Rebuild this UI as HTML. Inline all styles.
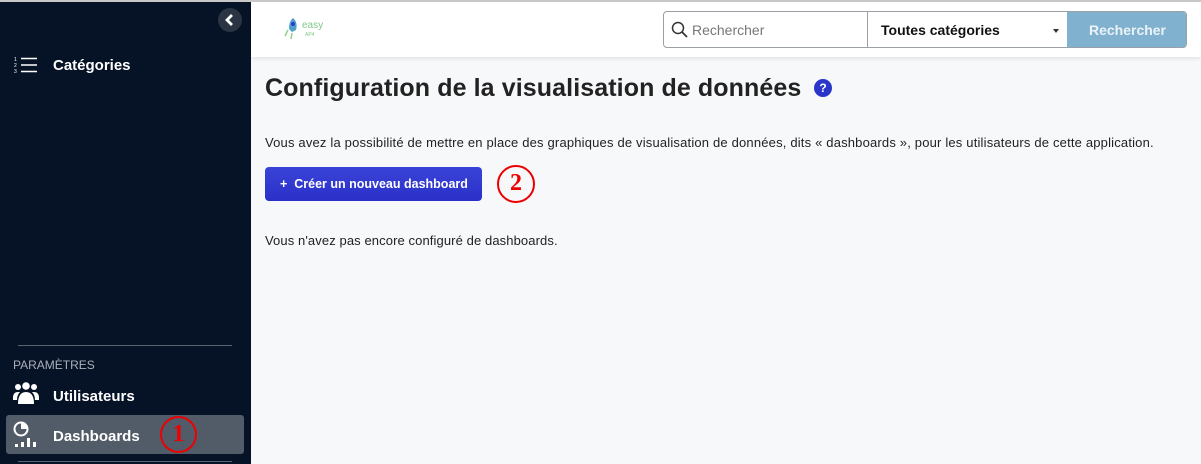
<!DOCTYPE html>
<html><head><meta charset="utf-8"><style>
*{box-sizing:border-box;margin:0;padding:0}
body{width:1201px;height:464px;overflow:hidden;font-family:"Liberation Sans",sans-serif;background:#f7f8fa;position:relative}
.top{position:absolute;left:0;top:0;width:1201px;height:2px;background:#c8c8c8;z-index:5}
.side{position:absolute;left:0;top:0;width:251px;height:464px;background:#061226;color:#fff}
.hdr{position:absolute;left:251px;top:0;width:950px;height:57px;background:#fff;box-shadow:0 2px 4px rgba(0,0,0,.08)}
.abs{position:absolute}
</style></head><body>
<div class="top"></div>
<div class="side">
  <div class="abs" style="left:218px;top:8px;width:24px;height:24px;border-radius:50%;background:#2b3442"></div>
  <svg class="abs" style="left:224px;top:13px" width="12" height="14" viewBox="0 0 12 14"><path d="M8 2 L3 7 L8 12" stroke="#fff" stroke-width="2.8" fill="none"/></svg>
  <svg class="abs" style="left:14px;top:56px" width="24" height="18" viewBox="0 0 24 18"><g fill="#fff" font-size="5" font-family="Liberation Sans"><text x="0" y="5">1</text><text x="0" y="11">2</text><text x="0" y="17">3</text></g><path d="M7 2.5H23M7 9H23M7 15.5H23" stroke="#fff" stroke-width="1.6"/></svg>
  <div class="abs" style="left:53px;top:57px;font-size:15px;font-weight:bold">Catégories</div>
  <div class="abs" style="left:18px;top:345px;width:214px;height:1px;background:#5a6270"></div>
  <div class="abs" style="left:13px;top:358px;font-size:12px;color:#aab0ba">PARAMÈTRES</div>
  <svg class="abs" style="left:13px;top:382px" width="26" height="24" viewBox="0 0 26 24"><g fill="#fff"><circle cx="5" cy="5" r="3"/><circle cx="13" cy="4" r="3.8"/><circle cx="21" cy="5" r="3"/><path d="M0 16q0-6 5-6h2q-3 3-3 8H0z"/><path d="M26 16q0-6-5-6h-2q3 3 3 8h4z"/><path d="M5 22q0-12 8-12t8 12z"/></g></svg>
  <div class="abs" style="left:53px;top:388px;font-size:15px;font-weight:bold">Utilisateurs</div>
  <div class="abs" style="left:6px;top:415px;width:238px;height:39px;background:#525b68;border-radius:3px"></div>
  <svg class="abs" style="left:13px;top:420px" width="26" height="28" viewBox="0 0 26 28"><circle cx="8" cy="9" r="6.5" stroke="#fff" stroke-width="2" fill="none"/><path d="M8 9V3A6 6 0 0 1 14 9z" fill="#fff"/><g fill="#fff"><rect x="2" y="24" width="3" height="3"/><rect x="8" y="22" width="3" height="5"/><rect x="14" y="18" width="3" height="9"/><rect x="20" y="22" width="3" height="5"/></g></svg>
  <div class="abs" style="left:53px;top:428px;font-size:15px;font-weight:bold">Dashboards</div>
  <div class="abs" style="left:160px;top:416px;width:37px;height:37px;border:2px solid #e00;border-radius:50%;color:#e00;font-family:'Liberation Serif',serif;font-weight:bold;font-size:24px;text-align:center;line-height:32px">1</div>
  <div class="abs" style="left:18px;top:461px;width:214px;height:1px;background:#5a6270"></div>
</div>
<div class="hdr">
  <svg class="abs" style="left:32px;top:14px" width="48" height="28" viewBox="0 0 48 28"><path d="M10 4q5 4 3 12l-4 2-3-3q0-8 4-11z" fill="#4fa0c8"/><circle cx="10" cy="10" r="2" fill="#2a3bd6"/><path d="M5 16l-3 6M9 19l-1 6" stroke="#8fd08f" stroke-width="1.5"/><text x="19" y="14" font-size="10" fill="#7dc88a" font-family="Liberation Sans">easy</text><text x="22" y="22" font-size="5" fill="#7dc88a" font-family="Liberation Sans">AP4</text></svg>
  <div class="abs" style="left:412px;top:11px;width:524px;height:37px;border:1px solid #9aa0a6;border-radius:4px;background:#fff;overflow:hidden">
    <svg class="abs" style="left:7px;top:9px" width="18" height="18" viewBox="0 0 18 18"><circle cx="7" cy="7" r="5.5" stroke="#333" stroke-width="1.5" fill="none"/><path d="M11 11l5 5" stroke="#333" stroke-width="1.8"/></svg>
    <div class="abs" style="left:28px;top:10px;font-size:14px;color:#777">Rechercher</div>
    <div class="abs" style="left:203px;top:0;width:1px;height:37px;background:#9aa0a6"></div>
    <div class="abs" style="left:217px;top:10px;font-size:14px;font-weight:bold;color:#111">Toutes catégories</div>
    <div class="abs" style="left:389px;top:17px;border:3px solid transparent;border-top:4px solid #333"></div>
    <div class="abs" style="left:403px;top:0;width:121px;height:37px;background:#80b1cf;color:#eaf3f8;font-weight:bold;font-size:14px;text-align:center;line-height:36px">Rechercher</div>
  </div>
</div>
<div class="abs" style="left:265px;top:74px;font-size:25px;font-weight:bold;color:#222;letter-spacing:0.1px">Configuration de la visualisation de données</div>
<div class="abs" style="left:814px;top:79px;width:18px;height:18px;border-radius:50%;background:#2a36c9;color:#fff;font-size:12px;font-weight:bold;text-align:center;line-height:18px">?</div>
<div class="abs" style="left:265px;top:135px;font-size:13px;color:#222;letter-spacing:0.18px">Vous avez la possibilité de mettre en place des graphiques de visualisation de données, dits « dashboards », pour les utilisateurs de cette application.</div>
<div class="abs" style="left:265px;top:167px;width:217px;height:34px;border-radius:4px;background:linear-gradient(#3a43d8,#2a30c8);color:#fff;font-size:12.5px;font-weight:bold;line-height:34px;padding-left:15px">+&nbsp; Créer un nouveau dashboard</div>
<div class="abs" style="left:497px;top:165px;width:38px;height:38px;border:2px solid #e00;border-radius:50%;color:#e00;font-family:'Liberation Serif',serif;font-weight:bold;font-size:24px;text-align:center;line-height:33px">2</div>
<div class="abs" style="left:265px;top:233px;font-size:13px;color:#222;letter-spacing:0.1px">Vous n'avez pas encore configuré de dashboards.</div>
</body></html>
